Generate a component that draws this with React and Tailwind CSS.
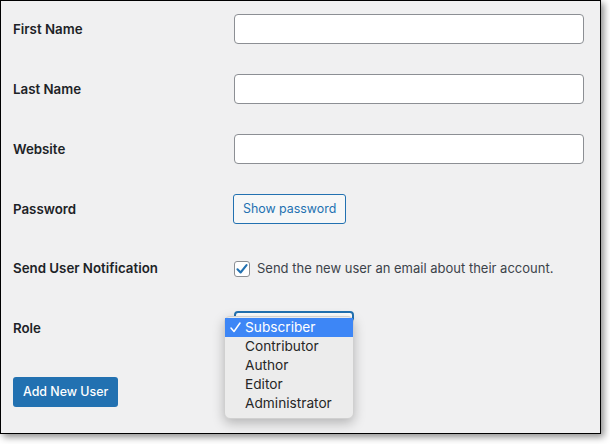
import React from "react";

const labelCls = "w-[221px] shrink-0 text-[13.3px] font-semibold text-[#1d2327] mt-[2px]";
const inputCls = "w-[350px] h-[30px] rounded-[4px] border border-[#8c8f94] bg-white";

function Row({ label, children, cls = "h-[30px]", lcls = "" }) {
  return (
    <div className={`flex items-center ${cls}`}>
      <div className={`${labelCls} ${lcls}`}>{label}</div>
      {children}
    </div>
  );
}

export default function App() {
  return (
    <div className="w-[610px] h-[444px] bg-white" style={{ fontFamily: "Inter, 'Liberation Sans', sans-serif" }}>
      <div className="relative w-[601px] h-[434px] border border-black bg-[#f0f0f1] shadow-[3px_3px_7px_rgba(0,0,0,0.45)] pl-[12px] pt-[13px] flex flex-col gap-[30px]">
        <Row label="First Name"><div className={inputCls} /></Row>
        <Row label="Last Name"><div className={inputCls} /></Row>
        <Row label="Website"><div className={inputCls} /></Row>
        <Row label="Password">
          <div className="-ml-[1px] h-[30px] px-[9px] flex items-center rounded-[3px] border border-[#2271b1] bg-[#f6f7f7] text-[12.4px] text-[#2271b1]">
            Show password
          </div>
        </Row>
        <Row label="Send User Notification" cls="h-[28px]">
          <div className="flex items-center gap-[7px] mt-[1px]">
            <div className="w-[16px] h-[16px] rounded-[3px] border border-[#8c8f94] bg-white flex items-center justify-center">
              <svg width="14" height="14" viewBox="0 0 20 20">
                <path d="M3.5 10.5 L8 15 L16.5 4.5" fill="none" stroke="#2271b1" strokeWidth="3" strokeLinecap="round" strokeLinejoin="round" />
              </svg>
            </div>
            <span className="text-[13px] text-[#3c434a]">Send the new user an email about their account.</span>
          </div>
        </Row>
        <Row label="Role" cls="h-[30px] -mt-[1px]" lcls="mt-[5px]">
          <div className="relative">
            <div className="w-[120px] h-[30px] rounded-[4px] border-2 border-[#2271b1] bg-white" />
            <div className="absolute left-[-10px] top-[5px] w-[130px] rounded-[6px] bg-[#ececec] border border-[#d0d0d0] shadow-[0_4px_12px_rgba(0,0,0,0.25)] py-[1px] text-[13.7px] text-[#262626]">
              <div className="h-[19px] bg-[#3d86f6] text-white flex items-center">
                <span className="w-[20px] pl-[5px] flex items-center">
                  <svg width="11" height="11" viewBox="0 0 11 11">
                    <path d="M1 6 L4 9.5 L10 1" fill="none" stroke="white" strokeWidth="1.5" strokeLinecap="round" strokeLinejoin="round" />
                  </svg>
                </span>
                <span>Subscriber</span>
              </div>
              {["Contributor", "Author", "Editor", "Administrator"].map((t) => (
                <div key={t} className="h-[19px] flex items-center pl-[20px]">{t}</div>
              ))}
              <div className="h-[4px]" />
            </div>
          </div>
        </Row>
        <div className="mt-[6px]">
          <div className="inline-flex items-center h-[30px] px-[10px] rounded-[3px] bg-[#2271b1] text-white text-[12.4px] font-medium">
            Add New User
          </div>
        </div>
      </div>
    </div>
  );
}
